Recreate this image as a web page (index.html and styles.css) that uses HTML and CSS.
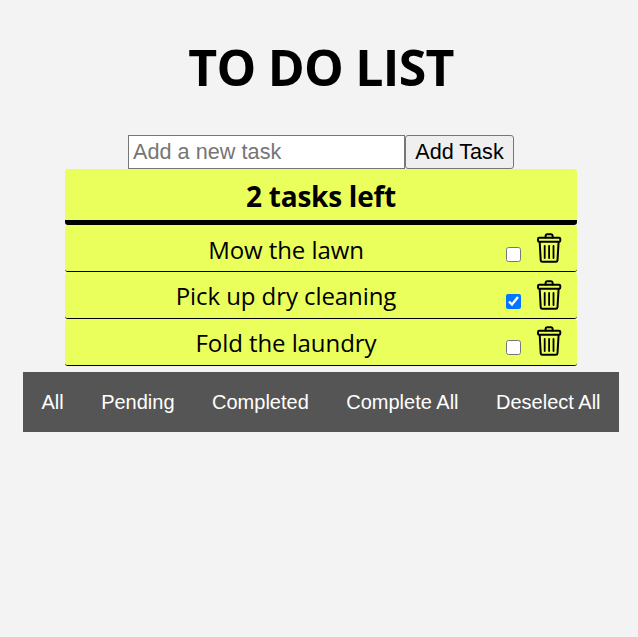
FILE: index.html
```html
<!DOCTYPE html>
<html lang="en">
<head>
<meta charset="utf-8">
<title>To Do List</title>
<link rel="stylesheet" href="styles.css">
</head>
<body>
<svg class="sprite" aria-hidden="true">
  <symbol id="trash" viewBox="0 0 26 32">
    <g fill="none" stroke="#000" stroke-width="2" stroke-linejoin="round" stroke-linecap="round">
      <path d="M9.6 5.6V3.8Q9.6 2.3 11 2.3h4.2q1.4 0 1.4 1.5v1.8"/>
      <rect x="2" y="5.8" width="22.3" height="4" rx="1.2"/>
      <path d="M3.7 10l1 18.2Q4.8 29.8 6.4 29.8h13.4q1.6 0 1.7-1.6L22.6 10"/>
      <path stroke-width="1.8" d="M8.7 14v12M13.1 14v12M17.5 14v12"/>
    </g>
  </symbol>
</svg>
<main class="app">
  <h1 class="title">TO DO LIST</h1>
  <form class="add">
    <input class="add-input" type="text" placeholder="Add a new task">
    <button class="add-button" type="button">Add Task</button>
  </form>
  <section class="list">
    <h2 class="summary">2 tasks left</h2>
    <div class="task"><span class="name">Mow the lawn</span><input class="check" type="checkbox"><svg class="trash"><use href="#trash"/></svg></div>
    <div class="task"><span class="name">Pick up dry cleaning</span><input class="check" type="checkbox" checked><svg class="trash"><use href="#trash"/></svg></div>
    <div class="task"><span class="name">Fold the laundry</span><input class="check" type="checkbox"><svg class="trash"><use href="#trash"/></svg></div>
  </section>
  <nav class="filters">
    <a>All</a><a>Pending</a><a>Completed</a><a>Complete All</a><a>Deselect All</a>
  </nav>
</main>
</body>
</html>
```
FILE: styles.css
```css
* { box-sizing: border-box; }
body {
  margin: 0;
  background: #f3f3f3;
  color: #000;
  font-family: "Segoe UI", "Open Sans", "Noto Sans", sans-serif;
}
.sprite { position: absolute; width: 0; height: 0; }
.app {
  width: 596px;
  margin-left: 23px;
  display: flex;
  flex-direction: column;
  align-items: center;
}
.title {
  margin: 0;
  height: 135px;
  line-height: 135px;
  font-size: 50px;
  font-weight: 700;
  letter-spacing: -0.75px;
  white-space: nowrap;
}
.add { display: flex; height: 34px; }
.add-input, .add-button {
  height: 34px;
  font: 21.6px "Liberation Sans", Arial, sans-serif;
}
.add-input {
  width: 277px;
  padding: 1px 4px;
  border: 1px solid #767676;
}
.add-input::placeholder { color: #757575; letter-spacing: 0.05px; }
.add-button {
  width: 109px;
  padding: 0;
  border: 1px solid #767676;
  border-radius: 3px;
  background: #efefef;
  color: #000;
}
.list { width: 512px; }
.summary {
  margin: 0;
  height: 56px;
  line-height: 55px;
  border-bottom: 5px solid #000;
  border-radius: 3px;
  background: #eaff5b;
  text-align: center;
  font-size: 28px;
  font-weight: 700;
  letter-spacing: -0.25px;
}
.task {
  display: flex;
  align-items: flex-start;
  height: 47px;
  border-bottom: 1px solid #000;
  border-radius: 3px;
  background: #eaff5b;
}
.name {
  width: 441px;
  padding-left: 1px;
  text-align: center;
  line-height: 50px;
  font-size: 24px;
  letter-spacing: -0.08px;
  white-space: nowrap;
}
.task:nth-child(n+3) .name { line-height: 48px; }
.check { width: 15px; height: 15px; margin: 22px 15px 0 0; }
.trash { width: 26px; height: 32px; margin-top: 7px; }
.task:last-child .check { margin-top: 21px; }
.task:last-child .trash { margin-top: 6px; }
.filters {
  display: flex;
  gap: 37.5px;
  width: 596px;
  height: 60px;
  margin-top: 6px;
  padding-left: 18.4px;
  background: #555;
  color: #fff;
  font: 20px/60px "Liberation Sans", Arial, sans-serif;
  white-space: nowrap;
}
```
